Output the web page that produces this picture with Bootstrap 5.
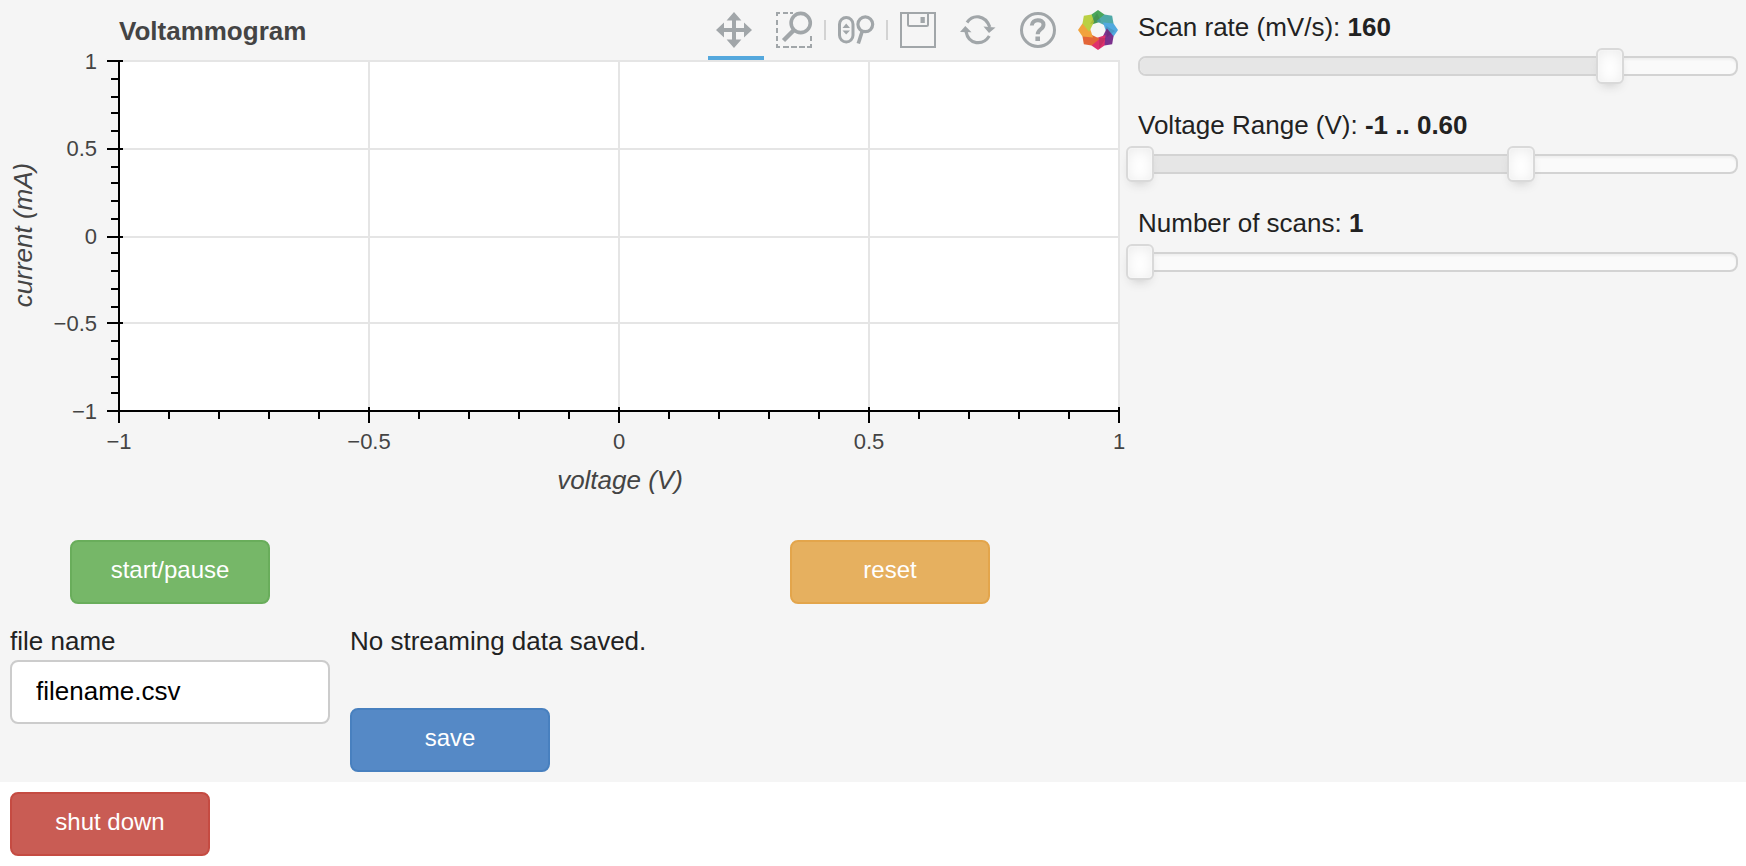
<!DOCTYPE html>
<html lang="en">
<head>
<meta charset="utf-8">
<title>Voltammogram</title>
<link href="https://cdn.jsdelivr.net/npm/bootstrap@5.3.0/dist/css/bootstrap.min.css" rel="stylesheet">
<style>
body{font-family:"Liberation Sans",Arial,sans-serif;font-size:26px;line-height:30px;color:#222;background:#fff}
.panel{background:#f5f5f5;height:782px}
.plot{width:1128px}
.plot-head{height:60px;padding:0 10px 0 119px}
.plot-title{font-size:26px;font-weight:700;color:#444;line-height:30px;margin:16px 0 0}
.tool{width:56px;height:60px;padding-top:12px;border-bottom:4px solid transparent;margin-right:4px;display:flex;justify-content:center;align-items:flex-start;color:#a1a6a9}
.tool.active{border-color:#54a8dd;padding-right:4px;margin-right:2px}
.tool svg{display:block;overflow:visible;flex:none}
.sep{width:2px;height:20px;background:#d3d3d3;margin:20px 0 0}
.chart{display:block;overflow:visible}
.chart text{fill:#444;font-size:22px}
.chart text.axis-name{font-size:26px;font-style:italic}
.controls{width:618px;padding:10px 8px 0 10px}
.control{height:98px;padding-top:2px}
.track{height:20px;margin-top:14px;border:2px solid #d3d3d3;border-radius:8px;background:#fafafa;box-shadow:inset 0 2px 2px #f0f0f0;position:relative}
.fill{height:16px;background:#e6e6e6;border-radius:6px 0 0 6px}
.handle{position:absolute;top:-10px;width:28px;height:36px;margin-left:-14px;border:2px solid #d9d9d9;border-radius:6px;background:#fff;box-shadow:inset 0 0 2px #fff,inset 0 2px 14px #ebebeb,0 6px 12px -6px #bbb}
.action{width:200px;height:64px;padding:16px 0 20px;border-width:2px;border-radius:8px;font-size:24px;line-height:24px;color:#fff}
.go{background:#76b768;border-color:#69ad5b}
.again{background:#e6b05f;border-color:#e3a54b}
.keep{background:#5589c6;border-color:#4880bf}
.stop{background:#c95c54;border-color:#c54b42}
.field{width:320px}
.field input{height:64px;margin-top:4px;padding:0 24px 2px;border:2px solid #ccc;border-radius:8px;font-size:26px;color:#000}
</style>
</head>
<body>
<main class="panel">
  <div class="d-flex">
    <section class="plot">
      <header class="plot-head d-flex justify-content-between">
        <h1 class="plot-title">Voltammogram</h1>
        <div class="d-flex">
          <div class="tool active"><svg width="36" height="36" fill="currentColor"><path d="M18 0l7.4 8.500H20V16h8v-5.500L36 18l-8 7.500V20h-8v7.500h5.400L18 36l-7.400-8.500H16V20H8v5.500L0 18l8-7.500V16h8V8.500h-5.400z"/></svg></div>
          <div class="tool" style="margin-right:2px"><svg width="36" height="36" fill="none" stroke="currentColor"><path d="M0 1h4m3 0h5m2 0h3M1 0v4m0 4v5m0 3v5m0 3v5m0 3v4M0 35h4m3 0h6m2 0h6m2 0h6m2 0h5M35 24v5m0 3v4" stroke-width="2"/><circle cx="24.700" cy="11" r="9.600" stroke-width="3.600"/><path d="M18 18L7.500 28.500" stroke-width="4.500"/></svg></div>
          <div class="sep"></div>
          <div class="tool mx-0" style="width:60px"><svg width="36" height="36" fill="none" stroke="currentColor"><rect x="1.500" y="5.500" width="13.500" height="24.500" rx="6.700" stroke-width="3"/><path d="M4.500 16l3.700-4.500L12 16zm0 2.500h7.500L8.200 22.500z" fill="currentColor" stroke="none"/><circle cx="27.300" cy="12.300" r="7.400" stroke-width="3.200"/><path d="M24.300 19L20.300 31.500" stroke-width="3.600"/></svg></div>
          <div class="sep"></div>
          <div class="tool" style="margin-left:2px"><svg width="36" height="36" fill="none" stroke="currentColor" stroke-width="2"><path d="M1 1h34v34H1z"/><path d="M8 1v11.500q0 1.500 1.500 1.500h17q1.500 0 1.500-1.500V1"/><path d="M20.500 5h4.300v6h-4.300z" fill="currentColor" stroke="none"/></svg></div>
          <div class="tool"><svg width="36" height="36" fill="none" stroke="currentColor" stroke-width="3.200"><path d="M7 10.500C13 2 25 2.500 29.800 15M29.300 24C23 34 8.500 33 6 19.500"/><path d="M23.500 14.500L35.500 15.500 29 21zM0 20L5.300 14 11.500 20.300z" fill="currentColor" stroke="none"/></svg></div>
          <div class="tool"><svg width="36" height="36" fill="none" stroke="currentColor"><circle cx="18" cy="18" r="16.500" stroke-width="3"/><path d="M11.800 13.500C12 6.500 23.500 6.500 23.500 12.700C23.500 17.500 17.700 17 17.700 22.300" stroke-width="4"/><path d="M15.400 24.500h4.600V29h-4.600z" fill="currentColor" stroke="none"/></svg></div>
          <svg width="40" height="40" viewBox="-20 -20 40 40" style="margin:10px 0 0 8px">
            <defs><path id="petal" d="M-6.500-15.500L0-20 6.500-15.500 3-8.500-7.500-5z"/></defs>
            <use href="#petal" fill="#4aa65a"/>
            <use href="#petal" fill="#4fa9a8" transform="rotate(45)"/>
            <use href="#petal" fill="#51a9df" transform="rotate(90)"/>
            <use href="#petal" fill="#7b318d" transform="rotate(135)"/>
            <use href="#petal" fill="#df316d" transform="rotate(180)"/>
            <use href="#petal" fill="#e36537" transform="rotate(225)"/>
            <use href="#petal" fill="#f1a33d" transform="rotate(270)"/>
            <use href="#petal" fill="#bad043" transform="rotate(315)"/>
            <path d="M-8-6L3-8.500-1-17zM17 1L8-4 9 7zM8 8L1 8 1 19z" fill="#222" fill-opacity=".12"/>
          </svg>
        </div>
      </header>
      <svg class="chart" width="1128" height="460" viewBox="0 60 1128 460">
        <path d="M119 61H1119V411H119z" fill="#fff"/>
        <path d="M119 61H1120M119 149H1119M119 237H1119M119 323H1119M369 61V411M619 61V411M869 61V411M1119 60V411" stroke="#e5e5e5" stroke-width="2" fill="none"/>
        <path d="M119 60V423M107 411H1120M107 61h16M107 149h16M107 237h16M107 323h16M369 407v16M619 407v16M869 407v16M1119 407v16
          M111 79h8M111 97h8M111 113h8M111 131h8M111 167h8M111 183h8M111 201h8M111 219h8M111 253h8M111 271h8M111 289h8M111 307h8M111 341h8M111 359h8M111 377h8M111 393h8
          M169 411v8M219 411v8M269 411v8M319 411v8M419 411v8M469 411v8M519 411v8M569 411v8M669 411v8M719 411v8M769 411v8M819 411v8M919 411v8M969 411v8M1019 411v8M1069 411v8" stroke="#000" stroke-width="2" fill="none"/>
        <g text-anchor="end">
          <text x="97" y="69">1</text><text x="97" y="156">0.5</text><text x="97" y="244">0</text><text x="97" y="331">−0.5</text><text x="97" y="419">−1</text>
        </g>
        <g text-anchor="middle">
          <text x="119" y="449">−1</text><text x="369" y="449">−0.5</text><text x="619" y="449">0</text><text x="869" y="449">0.5</text><text x="1119" y="449">1</text>
          <text class="axis-name" x="620" y="489">voltage (V)</text>
          <text class="axis-name" transform="translate(32 235) rotate(-90)">current (mA)</text>
        </g>
      </svg>
    </section>
    <section class="controls">
      <div class="control">
        <div>Scan rate (mV/s): <b>160</b></div>
        <div class="track"><div class="fill" style="width:79%"></div><div class="handle" style="left:78.850%"></div></div>
      </div>
      <div class="control">
        <div>Voltage Range (V): <b>-1 .. 0.60</b></div>
        <div class="track"><div class="fill" style="width:64%"></div><div class="handle" style="left:0"></div><div class="handle" style="left:63.950%"></div></div>
      </div>
      <div class="control">
        <div>Number of scans: <b>1</b></div>
        <div class="track"><div class="handle" style="left:0"></div></div>
      </div>
    </section>
  </div>
  <div class="d-flex" style="padding:20px 0 0 70px;gap:520px">
    <button class="btn action go">start/pause</button>
    <button class="btn action again">reset</button>
  </div>
  <div class="d-flex" style="padding:22px 10px 0;gap:20px">
    <div class="field">
      <label class="d-block" for="fname">file name</label>
      <input id="fname" class="form-control" type="text" value="filename.csv">
    </div>
    <div>
      <div>No streaming data saved.</div>
      <button class="btn action keep" style="margin-top:52px">save</button>
    </div>
  </div>
</main>
<footer class="d-flex" style="padding:10px">
  <button class="btn action stop">shut down</button>
</footer>
</body>
</html>
